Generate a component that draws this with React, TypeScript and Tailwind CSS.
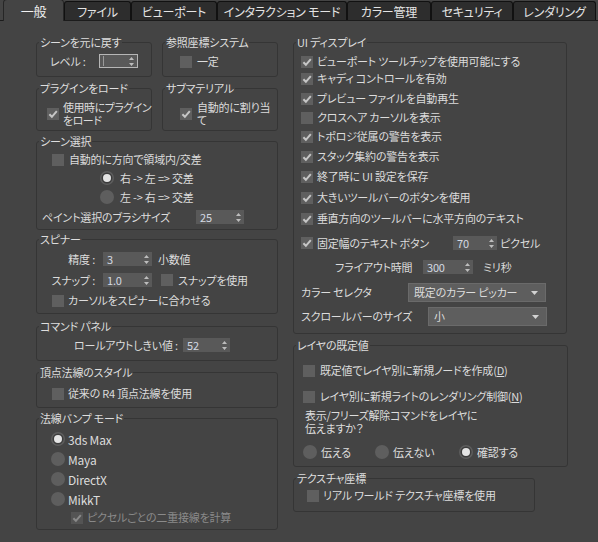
import React from 'react';

const tabs = [
  { label: '一般', w: 'w-[61px]', active: true },
  { label: 'ファイル', w: 'w-[67px]' },
  { label: 'ビューポート', w: 'w-[86px]' },
  { label: 'インタラクション モード', w: 'w-[130px]' },
  { label: 'カラー管理', w: 'w-[84px]' },
  { label: 'セキュリティ', w: 'w-[82px]' },
  { label: 'レンダリング', w: 'w-[83px]' },
];

const uiRows = [
  { label: 'ビューポート ツールチップを使用可能にする', mt: 'mt-[6px]' },
  { label: 'キャディ コントロールを有効', mt: 'mt-[4px]' },
  { label: 'プレビュー ファイルを自動再生', mt: 'mt-[7px]' },
  { label: 'クロスヘア カーソルを表示', mt: 'mt-[6px]', off: true },
  { label: 'トポロジ従属の警告を表示', mt: 'mt-[6px]' },
  { label: 'スタック集約の警告を表示', mt: 'mt-[7px]' },
  { label: '終了時に UI 設定を保存', mt: 'mt-[7px]' },
  { label: '大きいツールバーのボタンを使用', mt: 'mt-[8px]' },
  { label: '垂直方向のツールバーに水平方向のテキスト', mt: 'mt-[8px]' },
];

function CheckBox({ checked = false, disabled = false }: { checked?: boolean; disabled?: boolean }) {
  return (
    <span
      className={
        disabled
          ? 'flex h-[12px] w-[12px] shrink-0 items-center justify-center bg-[#545454]'
          : 'flex h-[12px] w-[12px] shrink-0 items-center justify-center bg-[#5f5f5f]'
      }
    >
      {checked && (
        <svg width="10" height="10" viewBox="0 0 10 10">
          <path
            d="M1.4 5.2 L3.9 7.8 L8.8 2.2"
            fill="none"
            stroke={disabled ? '#8a8a8a' : '#c6c6c6'}
            strokeWidth="2"
          />
        </svg>
      )}
    </span>
  );
}

function Radio({ on = false }: { on?: boolean }) {
  return (
    <span className="flex h-[14px] w-[14px] shrink-0 items-center justify-center rounded-full bg-[#5e5e5e]">
      {on && <span className="h-[8px] w-[8px] rounded-full bg-[#e4e4e4] shadow-[0_0_0_1.5px_#3c3c3c]" />}
    </span>
  );
}

function Arrows() {
  return (
    <svg width="5" height="9" viewBox="0 0 5 9" className="shrink-0">
      <path d="M2.5 0 L5 3 L0 3 Z M0 6 L5 6 L2.5 9 Z" fill="#bdbdbd" />
    </svg>
  );
}

function Spinner({ value = '', className = '', active = false }: { value?: string; className?: string; active?: boolean }) {
  return (
    <span
      className={
        (active
          ? 'flex h-[14px] items-center justify-between border border-[#b6b6b6] bg-[#595959] pl-[3px] pr-[3px] '
          : 'flex h-[14px] items-center justify-between bg-[#595959] pl-[4px] pr-[3px] ') + className
      }
    >
      {active ? <span className="h-[10px] w-px bg-[#9a9a9a]" /> : <span className="text-[#d4d9e2]">{value}</span>}
      <Arrows />
    </span>
  );
}

function Dropdown({ value, className = '' }: { value: string; className?: string }) {
  return (
    <span
      className={
        'flex h-[19px] items-center justify-between border border-[#6a6a6a] bg-[#5e5e5e] pl-[5px] pr-[7px] ' + className
      }
    >
      <span>{value}</span>
      <svg width="7" height="4" viewBox="0 0 7 4">
        <path d="M0 0 L7 0 L3.5 4 Z" fill="#d2d2d2" />
      </svg>
    </span>
  );
}

function Group({ title, className = '', children }: { title: string; className?: string; children?: React.ReactNode }) {
  return (
    <fieldset className={'shrink-0 rounded-[3px] border border-[#353535] ' + className}>
      <legend className="ml-[2px] px-[1px] text-[11px] leading-[14px] text-[#dedede]">{title}</legend>
      {children}
    </fieldset>
  );
}

export default function App() {
  return (
    <div className="h-[542px] w-[598px] overflow-hidden whitespace-nowrap bg-[#444444] font-['Noto_Sans_CJK_JP',sans-serif] text-[11px] leading-[13px] tracking-[-0.2px] text-[#dcdcdc] [font-feature-settings:'palt']">
      {/* tab strip */}
      <div className="flex h-[21px] items-end border-b border-[#1c1c1c] pl-[3px]">
        {tabs.map((t) => (
          <div
            key={t.label}
            className={
              t.active
                ? 'relative -mb-px flex h-[22px] shrink-0 items-center justify-center rounded-t-[4px] border border-b-0 border-[#262626] bg-[#444444] text-[13px] text-[#f2f2f2] ' + t.w
                : 'flex h-[19px] shrink-0 items-center justify-center rounded-t-[3px] border border-b-0 border-[#111111] bg-[#2d2d2d] text-[12px] text-[#e4e4e4] ' + t.w
            }
          >
            {t.label}
          </div>
        ))}
      </div>

      <div className="flex">
        {/* left column */}
        <div className="ml-[36px] mt-[14px] flex w-[242px] shrink-0 flex-col">
          <div className="flex justify-between">
            <Group title="シーンを元に戻す" className="h-[42px] w-[116px]">
              <div className="flex items-center pl-[13px] pt-[5px]">
                <span className="w-[49px]">レベル :</span>
                <Spinner active className="w-[39px]" />
              </div>
            </Group>
            <Group title="参照座標システム" className="h-[42px] w-[116px]">
              <div className="flex items-center pl-[17px] pt-[6px]">
                <CheckBox />
                <span className="ml-[5px]">一定</span>
              </div>
            </Group>
          </div>

          <div className="mt-[4px] flex justify-between">
            <Group title="プラグインをロード" className="h-[50px] w-[116px]">
              <div className="flex items-center pl-[10px] pt-[6px]">
                <CheckBox checked />
                <span className="ml-[4px] tracking-[-0.5px]">
                  使用時にプラグイン
                  <br />
                  をロード
                </span>
              </div>
            </Group>
            <Group title="サブマテリアル" className="h-[50px] w-[116px]">
              <div className="flex items-center pl-[17px] pt-[6px]">
                <CheckBox checked />
                <span className="ml-[5px]">
                  自動的に割り当
                  <br />て
                </span>
              </div>
            </Group>
          </div>

          <Group title="シーン選択" className="mt-[3px] h-[96px] w-[242px]">
            <div className="flex flex-col">
              <div className="mt-[5px] flex items-center pl-[15px]">
                <CheckBox />
                <span className="ml-[5px]">自動的に方向で領域内/交差</span>
              </div>
              <div className="mt-[5px] flex h-[14px] items-center pl-[63px]">
                <Radio on />
                <span className="ml-[6px]">{'右 -> 左 => 交差'}</span>
              </div>
              <div className="mt-[5px] flex h-[14px] items-center pl-[63px]">
                <Radio />
                <span className="ml-[6px]">{'左 -> 右 => 交差'}</span>
              </div>
              <div className="mt-[6px] flex h-[14px] items-center pl-[5px]">
                <span className="w-[154px]">ペイント選択のブラシサイズ</span>
                <Spinner value="25" className="w-[48px]" />
              </div>
            </div>
          </Group>

          <Group title="スピナー" className="mt-[2px] h-[82px] w-[242px]">
            <div className="flex flex-col">
              <div className="mt-[6px] flex h-[14px] items-center">
                <span className="w-[58px] text-right">精度 :</span>
                <Spinner value="3" className="ml-[8px] w-[49px]" />
                <span className="ml-[6px]">小数値</span>
              </div>
              <div className="mt-[7px] flex h-[14px] items-center">
                <span className="w-[58px] text-right">スナップ :</span>
                <Spinner value="1.0" className="ml-[8px] w-[49px]" />
                <span className="ml-[9px]">
                  <CheckBox />
                </span>
                <span className="ml-[5px]">スナップを使用</span>
              </div>
              <div className="mt-[7px] flex items-center pl-[15px]">
                <CheckBox />
                <span className="ml-[4px]">カーソルをスピナーに合わせる</span>
              </div>
            </div>
          </Group>

          <Group title="コマンド パネル" className="mt-[5px] h-[42px] w-[242px]">
            <div className="mt-[5px] flex h-[14px] items-center pl-[37px]">
              <span className="w-[109px]">ロールアウトしきい値 :</span>
              <Spinner value="52" className="w-[47px]" />
            </div>
          </Group>

          <Group title="頂点法線のスタイル" className="mt-[4px] h-[43px] w-[242px]">
            <div className="mt-[8px] flex items-center pl-[15px]">
              <CheckBox />
              <span className="ml-[4px]">従来の R4 頂点法線を使用</span>
            </div>
          </Group>

          <Group title="法線バンプ モード" className="mt-[3px] h-[119px] w-[242px]">
            <div className="flex flex-col pl-[14px]">
              {['3ds Max', 'Maya', 'DirectX', 'MikkT'].map((m, i) => (
                <div key={m} className={i === 0 ? 'mt-[7px] flex h-[14px] items-center' : 'mt-[6px] flex h-[14px] items-center'}>
                  <Radio on={i === 0} />
                  <span className="ml-[3px] text-[12px]">{m}</span>
                </div>
              ))}
              <div className="ml-[20px] mt-[5px] flex items-center">
                <CheckBox checked disabled />
                <span className="ml-[4px] text-[#8a8a8a]">ピクセルごとの二重接線を計算</span>
              </div>
            </div>
          </Group>
        </div>

        {/* right column */}
        <div className="ml-[15px] mt-[14px] flex w-[275px] shrink-0 flex-col">
          <Group title="UI ディスプレイ" className="h-[299px] w-[274px]">
            <div className="flex flex-col pl-[7px]">
              {uiRows.map((r) => (
                <div key={r.label} className={'flex items-center ' + r.mt}>
                  <CheckBox checked={!r.off} />
                  <span className="ml-[4px]">{r.label}</span>
                </div>
              ))}
              <div className="mt-[11px] flex h-[14px] items-center">
                <CheckBox checked />
                <span className="ml-[4px] w-[136px]">固定幅のテキスト ボタン</span>
                <Spinner value="70" className="w-[44px]" />
                <span className="ml-[3px]">ピクセル</span>
              </div>
              <div className="mt-[10px] flex h-[14px] items-center pl-[34px]">
                <span className="w-[88px]">フライアウト時間</span>
                <Spinner value="300" className="w-[50px]" />
                <span className="ml-[10px]">ミリ秒</span>
              </div>
              <div className="mt-[9px] flex items-center">
                <span className="w-[107px]">カラー セレクタ</span>
                <Dropdown value="既定のカラー ピッカー" className="w-[138px]" />
              </div>
              <div className="mt-[5px] flex items-center">
                <span className="w-[127px]">スクロールバーのサイズ</span>
                <Dropdown value="小" className="w-[119px]" />
              </div>
            </div>
          </Group>

          <Group title="レイヤの既定値" className="mt-[4px] h-[129px] w-[275px]">
            <div className="flex flex-col pl-[9px]">
              <div className="mt-[12px] flex items-center">
                <CheckBox />
                <span className="ml-[5px]">
                  既定値でレイヤ別に新規ノードを作成(<span className="underline">D</span>)
                </span>
              </div>
              <div className="mt-[13px] flex items-center">
                <CheckBox />
                <span className="ml-[5px]">
                  レイヤ別に新規ライトのレンダリング制御(<span className="underline">N</span>)
                </span>
              </div>
              <div className="ml-[2px] mt-[6px] leading-[13px]">
                表示/フリーズ解除コマンドをレイヤに
                <br />
                伝えますか？
              </div>
              <div className="mt-[10px] flex h-[14px] items-center">
                <div className="flex w-[72px] items-center">
                  <Radio />
                  <span className="ml-[4px]">伝える</span>
                </div>
                <div className="flex w-[84px] items-center">
                  <Radio />
                  <span className="ml-[4px]">伝えない</span>
                </div>
                <div className="flex items-center">
                  <Radio on />
                  <span className="ml-[4px]">確認する</span>
                </div>
              </div>
            </div>
          </Group>

          <Group title="テクスチャ座標" className="mt-[4px] h-[41px] w-[242px]">
            <div className="mt-[4px] flex items-center pl-[13px]">
              <CheckBox />
              <span className="ml-[4px]">リアル ワールド テクスチャ座標を使用</span>
            </div>
          </Group>
        </div>
      </div>
    </div>
  );
}
